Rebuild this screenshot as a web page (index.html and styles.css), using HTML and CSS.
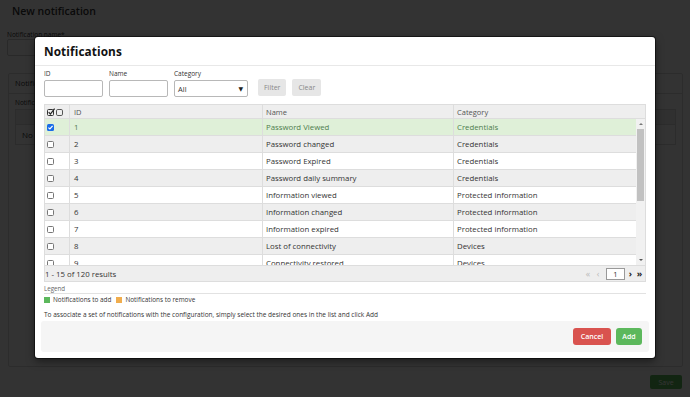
FILE: index.html
```html
<!DOCTYPE html>
<html lang="en">
<head>
<meta charset="utf-8">
<title>Notifications</title>
<link rel="stylesheet" href="styles.css">
</head>
<body>
<div class="page">
  <h1 class="page-title">New notification</h1>
  <div class="page-label">Notification name*</div>
  <div class="page-input"></div>
  <section class="page-panel">
    <h2 class="panel-title">Notifications</h2>
    <div class="panel-body">
      <div class="panel-label">Notifications</div>
      <div class="panel-table">
        <div class="panel-thead"></div>
        <div class="panel-row">No notifications</div>
      </div>
    </div>
  </section>
  <div class="page-actions"><button class="btn-save">Save</button></div>
</div>

<div class="backdrop"></div>

<div class="modal">
  <div class="m-head"><h2 class="m-title">Notifications</h2></div>
  <div class="m-body">
    <div class="filters">
      <div class="field"><label>ID</label><div class="input w-sm"></div></div>
      <div class="field"><label>Name</label><div class="input w-sm"></div></div>
      <div class="field"><label>Category</label><div class="input select"><span>All</span><span class="caret">▼</span></div></div>
      <button class="btn-light btn-filter">Filter</button>
      <button class="btn-light">Clear</button>
    </div>

    <div class="grid">
      <div class="row head">
        <div class="cell cb">
          <svg width="18" height="8" viewBox="0 0 18 8"><rect x="0.5" y="1.5" width="6" height="6" rx="1" fill="none" stroke="#333"/><path d="M1.7 4.2 L3.4 6.1 L7.6 0.6" fill="none" stroke="#222" stroke-width="1.2"/><rect x="9.5" y="1.5" width="6" height="6" rx="1.3" fill="none" stroke="#555"/></svg>
        </div>
        <div class="cell">ID</div>
        <div class="cell">Name</div>
        <div class="cell">Category</div>
      </div>
      <div class="tbody-wrap">
        <div class="tbody">
          <div class="row sel"><div class="cell cb"><span class="chk on"><svg width="7" height="7" viewBox="0 0 7 7"><path d="M1.4 3.6 L2.9 5 L5.6 1.8" fill="none" stroke="#fff" stroke-width="1.2"/></svg></span></div><div class="cell">1</div><div class="cell">Password Viewed</div><div class="cell">Credentials</div></div>
          <div class="row alt"><div class="cell cb"><span class="chk"></span></div><div class="cell">2</div><div class="cell">Password changed</div><div class="cell">Credentials</div></div>
          <div class="row"><div class="cell cb"><span class="chk"></span></div><div class="cell">3</div><div class="cell">Password Expired</div><div class="cell">Credentials</div></div>
          <div class="row alt"><div class="cell cb"><span class="chk"></span></div><div class="cell">4</div><div class="cell">Password daily summary</div><div class="cell">Credentials</div></div>
          <div class="row"><div class="cell cb"><span class="chk"></span></div><div class="cell">5</div><div class="cell">Information viewed</div><div class="cell">Protected information</div></div>
          <div class="row alt"><div class="cell cb"><span class="chk"></span></div><div class="cell">6</div><div class="cell">Information changed</div><div class="cell">Protected information</div></div>
          <div class="row"><div class="cell cb"><span class="chk"></span></div><div class="cell">7</div><div class="cell">Information expired</div><div class="cell">Protected information</div></div>
          <div class="row alt"><div class="cell cb"><span class="chk"></span></div><div class="cell">8</div><div class="cell">Lost of connectivity</div><div class="cell">Devices</div></div>
          <div class="row"><div class="cell cb"><span class="chk"></span></div><div class="cell">9</div><div class="cell">Connectivity restored</div><div class="cell">Devices</div></div>
        </div>
        <div class="sb">
          <div class="sb-btn"><span class="tri up"></span></div>
          <div class="sb-thumb"></div>
          <div class="sb-space"></div>
          <div class="sb-btn"><span class="tri down"></span></div>
        </div>
      </div>
      <div class="tfoot">
        <span class="count">1 - 15 of 120 results</span>
        <div class="pager">
          <span class="pg dim">«</span><span class="pg dim">‹</span>
          <span class="pg-box">1</span>
          <span class="pg">›</span><span class="pg">»</span>
        </div>
      </div>
    </div>

    <div class="legend-title">Legend</div>
    <div class="legend">
      <span class="lg"><span class="sq green"></span>Notifications to add</span>
      <span class="lg"><span class="sq orange"></span>Notifications to remove</span>
    </div>
    <p class="info">To associate a set of notifications with the configuration, simply select the desired ones in the list and click Add</p>
  </div>
  <div class="m-foot">
    <button class="btn btn-cancel">Cancel</button>
    <button class="btn btn-add">Add</button>
  </div>
</div>
</body>
</html>
```

FILE: styles.css
```css
* { box-sizing: border-box; }
html, body { margin: 0; padding: 0; }
body {
  width: 690px;
  height: 397px;
  overflow: hidden;
  background: #fff;
  font-family: "Open Sans", "DejaVu Sans", sans-serif;
  color: #333;
  position: relative;
}

/* underlying page */
.page { padding: 5px 8px 0 7px; }
.page-title { margin: 0 0 0 5px; font-size: 10.5px; font-weight: 600; line-height: 12px; color: #333; }
.page-label { margin-top: 14px; font-size: 6.5px; line-height: 8px; color: #333; }
.page-input { margin-top: 0; width: 180px; height: 17px; border: 1px solid #ccc; border-radius: 2px; }
.page-panel { margin: 17px 0 0 1px; width: 675px; height: 294px; border: 1px solid #ddd; border-radius: 2px; }
.panel-title { margin: 0; padding: 4px 6px; font-size: 7.5px; font-weight: 400; line-height: 11px; border-bottom: 1px solid #ddd; }
.panel-body { padding: 5px 6px; }
.panel-label { font-size: 6.5px; line-height: 8px; }
.panel-table { margin-top: 2px; border: 1px solid #ddd; }
.panel-thead { height: 15px; background: #eee; border-bottom: 1px solid #ddd; }
.panel-row { height: 19px; padding-left: 6px; font-size: 8px; line-height: 19px; }
.page-actions { display: flex; justify-content: flex-end; padding-top: 8px; }
.btn-save { width: 32px; height: 14px; border: 0; border-radius: 2px; background: #5cb85c; color: #fff; font-family: inherit; font-size: 7px; padding: 0; }

.backdrop { position: absolute; inset: 0; background: rgba(0, 0, 0, 0.8); }

/* modal */
.modal {
  position: absolute;
  left: 35px; top: 37px;
  width: 620px; height: 321px;
  background: #fff;
  border-radius: 3px;
  box-shadow: 0 0 0 1px rgba(0,0,0,.5), 0 3px 9px rgba(0,0,0,.5);
  display: flex;
  flex-direction: column;
}
.m-head { height: 29px; padding: 0 9px; border-bottom: 1px solid #e8e8e8; display: flex; align-items: center; }
.m-title { margin: 0; font-size: 11.8px; font-weight: 700; color: #111; letter-spacing: 0.1px; }

.m-body { padding: 3px 9px 0; }

.filters { display: flex; align-items: flex-end; gap: 6px; }
.field { display: flex; flex-direction: column; gap: 2px; }
.field label { font-size: 6.5px; line-height: 9px; color: #333; }
.input { height: 17px; border: 1px solid #b8b8b8; border-radius: 2px; background: #fff; }
.w-sm { width: 59px; }
.select { width: 74px; display: flex; align-items: center; justify-content: space-between; padding: 0 4px 0 3px; font-size: 7.5px; }
.caret { font-size: 6px; color: #222; }
.btn-light { height: 17px; margin-bottom: 1px; padding: 0 6px; border: 0; border-radius: 2px; background: #e6e6e6; color: #888; font-family: inherit; font-size: 7px; }
.btn-filter { margin-left: 4px; }

.grid { margin-top: 7px; border: 1px solid #ddd; }
.row { display: grid; grid-template-columns: 24px 193px 191px 1fr; height: 17px; border-bottom: 1px solid #ddd; font-size: 7.8px; background: #fff; }
.row.head { height: 14px; background: #eee; color: #555; font-size: 7.5px; }
.row.alt { background: #eee; }
.row.sel { background: #dff0d8; color: #4e7d4e; }
.cell { display: flex; align-items: center; padding-left: 3px; border-left: 1px solid #ddd; white-space: nowrap; overflow: hidden; }
.row .cell:nth-child(2) { padding-left: 4px; }
.cell.cb { border-left: 0; padding-left: 2px; }
.row.head .cell.cb { padding-left: 2px; }
.chk { display: inline-flex; width: 7px; height: 7px; border: 1px solid #777; border-radius: 1.5px; background: #fff; align-items: center; justify-content: center; }
.chk.on { border: 0; background: #1a6ce8; }

.tbody-wrap { display: flex; height: 146px; }
.tbody { flex: 1; overflow: hidden; }
.sb { width: 9px; background: #f1f1f1; display: flex; flex-direction: column; }
.sb-btn { height: 10px; display: flex; align-items: center; justify-content: center; }
.tri { width: 0; height: 0; border-left: 2.5px solid transparent; border-right: 2.5px solid transparent; }
.tri.up { border-bottom: 2.5px solid #777; }
.tri.down { border-top: 2.5px solid #555; }
.sb-thumb { height: 72px; margin: 0 1px; background: #c1c1c1; }
.sb-space { flex: 1; }

.tfoot { height: 16px; background: #eee; border-top: 1px solid #ddd; display: flex; align-items: center; justify-content: space-between; font-size: 7.8px; }
.pager { display: flex; align-items: center; gap: 0; padding-right: 1px; }
.pg { width: 9px; text-align: center; font-size: 9px; font-weight: 700; color: #222; line-height: 10px; }
.pg.dim { color: #bbb; font-weight: 400; width: 10px; }
.pg-box { width: 19px; height: 12px; margin: 0 1px 0 3px; border: 1px solid #999; background: #fff; font-size: 7.5px; line-height: 10px; text-align: center; }

.legend-title { margin-top: 3px; font-size: 6.2px; line-height: 8px; color: #666; border-bottom: 1px solid #e2e2e2; }
.legend { margin-top: 2px; display: flex; gap: 5px; font-size: 6.4px; line-height: 8px; color: #333; }
.lg { display: flex; align-items: center; gap: 3px; }
.sq { width: 6px; height: 6px; display: inline-block; }
.sq.green { background: #5cb85c; }
.sq.orange { background: #f0ad4e; }
.info { margin: 6px 0 0; font-size: 6.5px; line-height: 9px; color: #333; white-space: nowrap; }

.m-foot { margin: auto 6px 6px; height: 31px; background: #f5f5f5; border-radius: 3px; display: flex; align-items: center; justify-content: flex-end; gap: 5px; padding-right: 7px; }
.btn { height: 17px; border: 0; border-radius: 3px; color: #fff; font-family: inherit; font-size: 7px; font-weight: 600; padding: 0; }
.btn-cancel { width: 38px; background: #d9534f; }
.btn-add { width: 26px; background: #5cb85c; }
```
